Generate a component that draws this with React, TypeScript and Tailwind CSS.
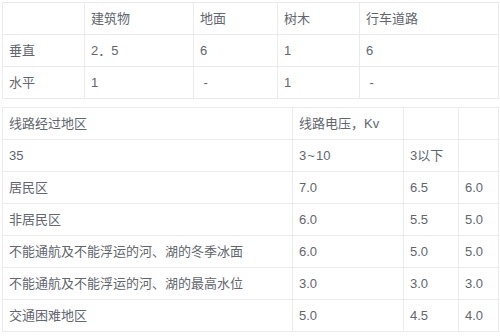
import React from 'react';

const cell = 'border border-[#ebebeb] px-[6px] h-[32px] align-middle text-left font-normal';

const top = [
  ['', '建筑物', '地面', '树木', '行车道路'],
  ['垂直', '2．5', '6', '1', '6'],
  ['水平', '1', '\u00a0-', '1', '\u00a0-'],
];

const rows = [
  ['线路经过地区', '线路电压，Kv', '', ''],
  ['35', '3\u200a~\u200a10', '3以下', ''],
  ['居民区', '7.0', '6.5', '6.0'],
  ['非居民区', '6.0', '5.5', '5.0'],
  ['不能通航及不能浮运的河、湖的冬季冰面', '6.0', '5.0', '5.0'],
  ['不能通航及不能浮运的河、湖的最高水位', '3.0', '3.0', '3.0'],
  ['交通困难地区', '5.0', '4.5', '4.0'],
];

const App: React.FC = () => {
  return (
    <div
      className="w-[500px] h-[336px] bg-white pl-[2px] pt-[2px] text-[13px] text-[#62666e] overflow-hidden"
      style={{ fontFamily: '"Liberation Sans", Arial, "Noto Sans CJK SC", sans-serif' }}
    >
      <table className="w-[496px] table-fixed border-collapse">
        <colgroup>
          <col className="w-[82px]" />
          <col className="w-[109px]" />
          <col className="w-[84px]" />
          <col className="w-[82px]" />
          <col className="w-[139px]" />
        </colgroup>
        <tbody>
          {top.map((r, i) => (
            <tr key={i}>
              {r.map((c, j) => (
                <td key={j} className={cell}>{c}</td>
              ))}
            </tr>
          ))}
        </tbody>
      </table>

      <table className="mt-[8px] w-[496px] table-fixed border-collapse">
        <colgroup>
          <col className="w-[290px]" />
          <col className="w-[111px]" />
          <col className="w-[55px]" />
          <col className="w-[40px]" />
        </colgroup>
        <tbody>
          {rows.map((r, i) => (
            <tr key={i}>
              {r.map((c, j) => (
                <td key={j} className={`${cell} whitespace-nowrap`}>{c}</td>
              ))}
            </tr>
          ))}
        </tbody>
      </table>
    </div>
  );
};

export default App;
